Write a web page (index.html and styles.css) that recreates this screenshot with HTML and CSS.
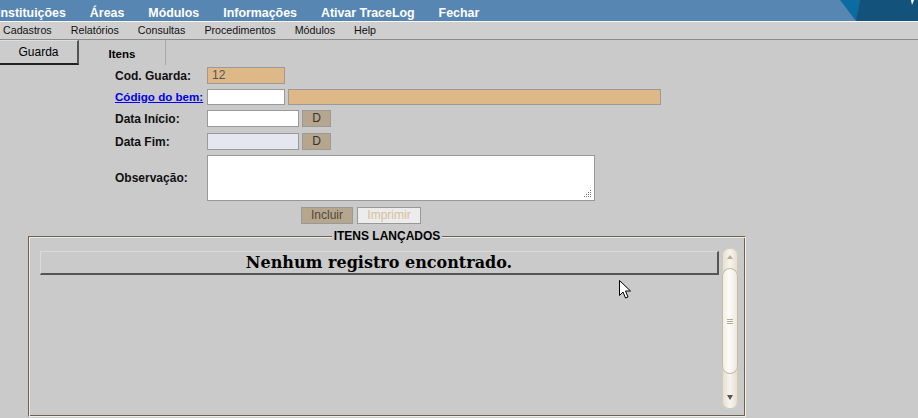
FILE: index.html
```html
<!DOCTYPE html>
<html>
<head>
<meta charset="utf-8">
<link rel="stylesheet" href="styles.css">
</head>
<body>
<div class="topbar">
  <nav class="topnav">
    <span>Instituições</span>
    <span>Áreas</span>
    <span>Módulos</span>
    <span>Informações</span>
    <span>Ativar TraceLog</span>
    <span>Fechar</span>
  </nav>
  <svg class="corner" width="78" height="21" viewBox="0 0 78 21">
    <polygon points="0,0 20,0 17,21 16,21" fill="#0b6d9f"/>
    <polygon points="20,0 78,0 78,21 16,21" fill="#13527b"/>
    <polygon points="71,0 74,0 72,5" fill="#ffffff"/>
  </svg>
</div>
<div class="menubar">
  <span>Cadastros</span>
  <span>Relatórios</span>
  <span>Consultas</span>
  <span>Procedimentos</span>
  <span>Módulos</span>
  <span>Help</span>
</div>
<div class="tabs">
  <div class="tab tab-off">Guarda</div>
  <div class="tab tab-on">Itens</div>
</div>
<div class="form">
  <div class="row r1">
    <label class="lbl">Cod. Guarda:</label>
    <div class="inp inp-ro w78">12</div>
  </div>
  <div class="row r2">
    <a class="lbl link" href="#">Código do bem:</a>
    <div class="inp w78"></div>
    <div class="inp inp-ro wlong"></div>
  </div>
  <div class="row r3">
    <label class="lbl">Data Início:</label>
    <div class="inp w92"></div>
    <div class="dbtn">D</div>
  </div>
  <div class="row r4">
    <label class="lbl">Data Fim:</label>
    <div class="inp inp-dis w92"></div>
    <div class="dbtn">D</div>
  </div>
  <div class="row r5">
    <label class="lbl">Observação:</label>
    <div class="textarea">
      <svg class="grip" width="8" height="8" viewBox="0 0 8 8">
        <rect x="6" y="0" width="1" height="1" fill="#777"/>
        <rect x="4" y="2" width="1" height="1" fill="#777"/>
        <rect x="6" y="2" width="1" height="1" fill="#777"/>
        <rect x="2" y="4" width="1" height="1" fill="#777"/>
        <rect x="4" y="4" width="1" height="1" fill="#777"/>
        <rect x="6" y="4" width="1" height="1" fill="#777"/>
        <rect x="0" y="6" width="1" height="1" fill="#777"/>
        <rect x="2" y="6" width="1" height="1" fill="#777"/>
        <rect x="4" y="6" width="1" height="1" fill="#777"/>
        <rect x="6" y="6" width="1" height="1" fill="#777"/>
      </svg>
    </div>
  </div>
  <div class="actions">
    <div class="btn btn-on">Incluir</div>
    <div class="btn btn-off">Imprimir</div>
  </div>
</div>
<fieldset class="box">
  <legend>ITENS LANÇADOS</legend>
  <div class="boxinner">
    <div class="empty">Nenhum registro encontrado.</div>
    <div class="scroll">
      <div class="sb-up"><span class="arr-up"></span></div>
      <div class="sb-thumb"><span class="grip-lines"></span></div>
      <div class="sb-track"></div>
      <div class="sb-down"><span class="arr-down"></span></div>
    </div>
  </div>
</fieldset>
<svg class="cursor" width="14" height="20" viewBox="0 0 14 20">
  <path d="M0.5 0.5 L0.5 15.5 L4 12 L6.5 18 L9 17 L6.5 11 L11.5 11 Z" fill="#fff" stroke="#000" stroke-width="1"/>
</svg>
</body>
</html>
```
FILE: styles.css
```css
html, body {
  margin: 0;
  padding: 0;
  background: #cacaca;
  font-family: "Liberation Sans", Arial, sans-serif;
  width: 918px;
  height: 418px;
  overflow: hidden;
  position: relative;
}
.topbar {
  height: 21px;
  background: #5786b3;
  border-bottom: 1px solid #f4f6f8;
  display: flex;
  overflow: hidden;
}
.topnav {
  display: flex;
  gap: 24px;
  margin-left: -3px;
  color: #fff;
  font-weight: bold;
  font-size: 12.4px;
  line-height: 27px;
  height: 21px;
  white-space: nowrap;
}
.corner {
  margin-left: auto;
  flex: none;
}
.menubar {
  height: 17px;
  background: #cfcfcf;
  border-bottom: 1px solid #8c8c8c;
  display: flex;
  gap: 19px;
  padding-left: 3px;
  font-size: 10.7px;
  line-height: 17px;
  color: #111;
}
.tabs {
  display: flex;
  height: 25px;
}
.tab {
  font-size: 12px;
  text-align: center;
  color: #000;
  box-sizing: border-box;
}
.tab-off {
  width: 79px;
  background: #cccccc;
  border-top: 1px solid #dedede;
  border-right: 2px solid #555;
  border-bottom: 2px solid #222;
  line-height: 23px;
}
.tab-on {
  width: 87px;
  font-weight: bold;
  font-size: 11.5px;
  border-right: 1px solid #a9a9a9;
  line-height: 28px;
}
.form {
  padding-left: 115px;
  padding-top: 2px;
}
.row {
  display: flex;
  align-items: center;
  gap: 3px;
  height: 17px;
  margin-bottom: 5px;
}
.r2 { height: 16px; }
.r3 { margin-bottom: 6px; }
.r5 { height: 46px; margin-bottom: 6px; }
.lbl {
  width: 89px;
  font-size: 12px;
  line-height: 14px;
  font-weight: bold;
  color: #111;
  flex: none;
  white-space: nowrap;
}
.link {
  color: #0000ee;
  text-decoration: underline;
  font-size: 11.6px;
}
.inp {
  height: 17px;
  box-sizing: border-box;
  border: 1px solid #9a9a9a;
  background: #fff;
  font-size: 12px;
  line-height: 15px;
  padding-left: 4px;
  color: #555;
  flex: none;
}
.r2 .inp { height: 16px; }
.inp-ro { background: #deb887; }
.inp-dis { background: #e6e6f0; }
.w78 { width: 78px; }
.w92 { width: 92px; }
.wlong { width: 373px; }
.dbtn {
  width: 29px;
  height: 17px;
  box-sizing: border-box;
  border: 1px solid #9a9a9a;
  background: #b6a68e;
  color: #333;
  font-size: 12px;
  line-height: 15px;
  text-align: center;
}
.textarea {
  width: 388px;
  height: 46px;
  box-sizing: border-box;
  border: 1px solid #999;
  background: #fff;
  position: relative;
}
.grip {
  position: absolute;
  right: 2px;
  bottom: 2px;
}
.actions {
  display: flex;
  gap: 4px;
  padding-left: 186px;
}
.btn {
  height: 17px;
  box-sizing: border-box;
  border: 1px solid #999;
  font-size: 12px;
  line-height: 15px;
  text-align: center;
}
.btn-on {
  width: 52px;
  background: #b6a68e;
  color: #55463a;
}
.btn-off {
  width: 64px;
  background: #ececec;
  color: #d6bf9c;
}
.box {
  margin: 6px 0 0 28px;
  width: 718px;
  height: 187px;
  box-sizing: border-box;
  border: 1px solid;
  border-color: #6b6252 #f2efe8 #f2efe8 #6b6252;
  padding: 1px;
  position: relative;
  box-shadow: inset 1px 1px 0 #eeebe4, inset -1px -1px 0 #6b6252;
}
.box legend {
  margin: 0 auto;
  font-size: 12px;
  font-weight: bold;
  color: #000;
  padding: 0 2px;
  line-height: 12px;
  background: #cacaca;
}
.boxinner {
  display: flex;
  padding: 8px 0 0 10px;
  gap: 3px;
}
.empty {
  width: 679px;
  height: 24px;
  box-sizing: border-box;
  border-top: 1px solid #dadada;
  border-left: 1px solid #dadada;
  border-right: 2px solid #555;
  border-bottom: 2px solid #555;
  font-family: "DejaVu Serif", serif;
  font-weight: bold;
  font-size: 16px;
  text-align: center;
  line-height: 22px;
  color: #000;
}
.scroll {
  width: 16px;
  height: 161px;
  margin-top: -3px;
  display: flex;
  flex-direction: column;
  border-radius: 7px;
  background: linear-gradient(90deg, #e4dccd, #f7f4ee 50%, #e4dccd);
  box-shadow: inset 0 0 0 1px #d4cab8;
}
.sb-up {
  height: 20px;
  display: flex;
  justify-content: center;
  padding-top: 7px;
  box-sizing: border-box;
}
.arr-up {
  width: 0; height: 0;
  border-left: 3px solid transparent;
  border-right: 3px solid transparent;
  border-bottom: 4px solid #b9ad98;
}
.sb-thumb {
  height: 106px;
  border-radius: 8px;
  background: linear-gradient(90deg, #f1ece3, #fcfbf8 45%, #ece6db);
  box-shadow: inset 0 0 0 1px #c6baa4;
  display: flex;
  align-items: center;
  justify-content: center;
}
.grip-lines {
  width: 6px;
  height: 5px;
  border-top: 1px solid #b8ab94;
  border-bottom: 1px solid #b8ab94;
  box-sizing: border-box;
  background: linear-gradient(#b8ab94, #b8ab94) center/6px 1px no-repeat;
}
.sb-track { flex: 1; }
.sb-down {
  height: 14px;
  display: flex;
  justify-content: center;
}
.arr-down {
  width: 0; height: 0;
  border-left: 3px solid transparent;
  border-right: 3px solid transparent;
  border-top: 5px solid #555;
}
.cursor {
  position: absolute;
  left: 619px;
  top: 280px;
}
```
